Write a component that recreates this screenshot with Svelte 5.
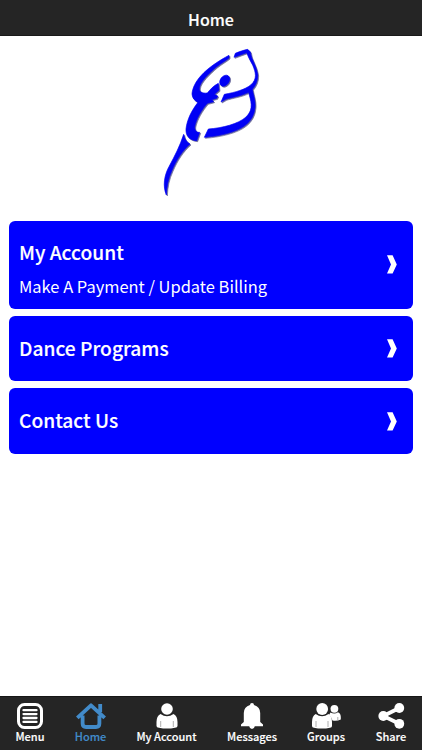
<script>
  const cards = [
    { title: 'My Account', sub: 'Make A Payment / Update Billing' },
    { title: 'Dance Programs' },
    { title: 'Contact Us' }
  ];
  const tabs = [
    { id: 'menu', label: 'Menu', width: 60 },
    { id: 'home', label: 'Home', width: 61 },
    { id: 'account', label: 'My Account', width: 91 },
    { id: 'messages', label: 'Messages', width: 80 },
    { id: 'groups', label: 'Groups', width: 68 },
    { id: 'share', label: 'Share', width: 62 }
  ];
</script>

<div class="app">
  <header><h1>Home</h1></header>
  <main>
    <svg class="logo" viewBox="0 0 330 480" width="110" height="160">
      <g fill="#0000f5" stroke="#0000f5" stroke-width="2">
        <path d="M222 46C195 60 158 84 139 106C122 124 112 145 111 162C112 175 119 182 129 187C110 211 96 239 93 267C92 285 100 300 125 302L134 277C126 278 119 272 119 261C123 238 139 210 157 190L176 185L170 179L185 175L188 168L178 163L192 151L190 130C176 137 166 148 157 159C141 161 132 155 133 144C136 124 161 101 184 81C199 69 213 62 222 54Z" />
        <ellipse cx="209" cy="122" rx="13" ry="18" transform="rotate(36 209 122)" />
        <path d="M237 52L241 40C253 35 264 31 278 28L286 36C288 58 306 79 308 105C308 122 303 135 292 148C295 166 302 182 300 202C296 249 258 269 218 280C197 286 173 290 148 292L160 267C202 264 250 252 273 231C299 207 286 180 281 157C257 169 228 172 212 178L198 186L208 163C242 157 271 148 287 135C308 117 302 97 293 75C285 61 280 51 275 38Z" />
        <path d="M86 283C75 318 58 350 43 378C27 406 23 439 34 465C35 439 40 414 51 391C64 360 82 332 105 312C94 306 88 296 86 283Z" />
      </g>
    </svg>
    <div class="cards">
      {#each cards as card}
        <section class="card" class:tall={card.sub}>
          <div>
            <h2>{card.title}</h2>
            {#if card.sub}<p>{card.sub}</p>{/if}
          </div>
          <svg width="10" height="19" viewBox="0 0 10 19"><path fill="#fff" d="M0 .3H5.6L9.8 9.4L5.6 18.6H0L4 9.4Z" /></svg>
        </section>
      {/each}
    </div>
  </main>
  <nav>
    {#each tabs as tab}
      <div class="tab" class:active={tab.id === 'home'} style:width="{tab.width}px">
        <svg width="32" height="28" viewBox="0 0 32 28" fill="none" stroke="currentColor">
          {#if tab.id === 'menu'}
            <rect x="4.5" y="2.5" width="23" height="23" rx="6" stroke-width="3" />
            <path d="M9.5 8.2H22.5M9.5 12.1H22.5M9.5 16H22.5M9.5 19.9H22.5" stroke-width="2.3" stroke-linecap="round" />
          {:else if tab.id === 'home'}
            <path d="M2.3 15.8L16 3.3L29.7 15.8M25.2 2V10M7.6 13.5V21.5Q7.6 25 11 25H21Q24.4 25 24.4 21.5V13.5" stroke-width="3.8" stroke-linejoin="round" />
          {:else if tab.id === 'account'}
            <g fill="currentColor" stroke="none"><circle cx="16" cy="7" r="5.8" /><path d="M9.5 12Q16 16.5 22.5 12Q26.5 14 26.5 20V24Q26.5 25.5 24 25.7Q16 27.5 8 25.7Q5.5 25.5 5.5 24V20Q5.5 14 9.5 12Z" /></g>
            <path d="M9.7 19V25M22.3 19V25" stroke="#999" stroke-width=".8" />
          {:else if tab.id === 'messages'}
            <path fill="currentColor" stroke="none" d="M16 1Q18 1 18 3Q24.2 5 24.2 11V20L27 22.5V24.3H18.8Q18.3 27 16 27Q13.7 27 13.2 24.3H5V22.5L7.8 20V11Q7.8 5 14 3Q14 1 16 1Z" />
          {:else if tab.id === 'groups'}
            <g fill="currentColor" stroke="none">
              <circle cx="24.4" cy="6.8" r="3.9" /><path d="M20.5 10.4Q24.4 12.8 28 10.2Q30.8 11.5 30.8 15V17.5Q27 19.4 22.5 18.6Q21.8 15 19 13Z" />
              <circle cx="12.2" cy="7" r="5.9" /><path d="M5.7 12Q12 16.5 18.5 12Q22 14 22 20V24Q22 25.5 20 25.7Q12 27.5 4 25.7Q2 25.5 2 24V20Q2 14 5.7 12Z" />
            </g>
            <path d="M6 19V25M18 19V25M27.8 15V18" stroke="#999" stroke-width=".8" />
          {:else}
            <path d="M24.3 6L8.3 14L24.3 21.8" stroke-width="3.8" />
            <g fill="currentColor" stroke="none"><circle cx="24.3" cy="6" r="4.9" /><circle cx="8.3" cy="14" r="4.9" /><circle cx="24.3" cy="21.8" r="4.9" /></g>
          {/if}
        </svg>
        <span>{tab.label}</span>
      </div>
    {/each}
  </nav>
</div>

<style>
  .app { width: 422px; height: 750px; display: flex; flex-direction: column; background: #fff; color: #fff; overflow: hidden; font-family: "Noto Sans CJK SC", "Noto Sans", sans-serif; }
  h1, h2, p { margin: 0; }
  header { height: 36px; box-sizing: border-box; padding-top: 6px; background: #252525; border-bottom: 1px solid #191919; text-align: center; }
  h1 { font-size: 16px; line-height: 26px; font-weight: 500; -webkit-text-stroke: .15px currentColor; }
  main { flex: 1; padding: 4px 9px 0; }
  .logo { display: block; margin-left: 146px; filter: drop-shadow(1px 1px .5px #66669a); }
  .cards { display: flex; flex-direction: column; gap: 7px; margin-top: 20.5px; }
  .card { height: 65.3px; box-sizing: border-box; display: flex; align-items: center; justify-content: space-between; padding: 0 16px 0 10px; border-radius: 6px; background: #00f; }
  .card h2 { margin-top: -2px; }
  .card.tall { height: 88.7px; }
  .card.tall h2 { margin-top: 6px; }
  h2 { font-size: 19.2px; line-height: 30px; font-weight: 500; -webkit-text-stroke: .15px currentColor; }
  p { font-size: 16.45px; line-height: 26px; margin-top: 6px; font-weight: 400; }
  nav { height: 54px; box-sizing: border-box; border-top: 1px solid #161616; background: #252525; display: flex; }
  .tab { display: flex; flex-direction: column; align-items: center; padding-top: 5px; }
  .tab svg { display: block; }
  .tab span { margin-top: -1px; font-size: 11px; line-height: 15px; font-weight: 500; white-space: nowrap; -webkit-text-stroke: .15px currentColor; }
  .active { color: #428bca; }
</style>
